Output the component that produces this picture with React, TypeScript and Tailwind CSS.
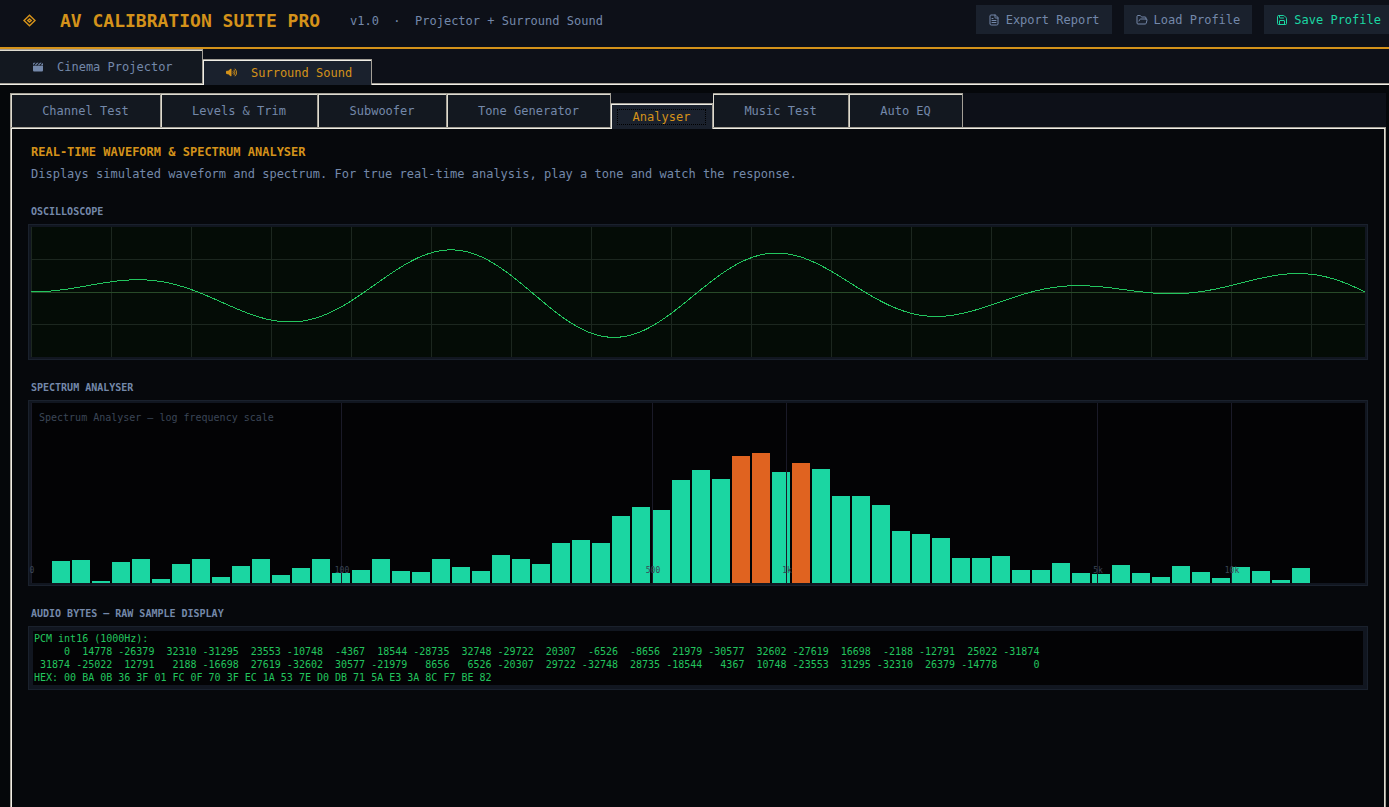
import React from "react";
import { FileText, FolderOpen, Save } from "lucide-react";
import { FaClapperboard, FaVolumeHigh } from "react-icons/fa6";

const BARS = [
  22, 23, 2, 21, 24, 4, 19, 24, 6, 17, 24, 8, 15, 24, 10, 13, 24, 12, 11, 24, 16, 12, 28, 24, 19, 40, 43, 40, 67, 76,
  73, 103, 113, 104, 127, 130, 111, 120, 114, 87, 87, 78, 52, 49, 45, 25, 25, 27, 13, 13, 20, 10, 9, 18, 10, 6, 17, 11,
  5, 16, 12, 3, 15,
];

const TICKS = [
  { x: 0, label: "0" },
  { x: 310, label: "100" },
  { x: 621, label: "500" },
  { x: 755, label: "1k" },
  { x: 1066, label: "5k" },
  { x: 1200, label: "10k" },
];

const WAVE_WIDTH = 1334;
const WAVE_POINTS = Array.from({ length: WAVE_WIDTH / 2 + 1 }, (_, i) => {
  const x = i * 2;
  const u = x / WAVE_WIDTH;
  const y = 65 - 45.5 * Math.sin(8 * Math.PI * u) * Math.sin(1.2 * Math.PI * u);
  return `${x},${y.toFixed(2)}`;
}).join(" ");

const ROW_A = [
  0, 14778, -26379, 32310, -31295, 23553, -10748, -4367, 18544, -28735, 32748, -29722, 20307, -6526, -8656, 21979,
  -30577, 32602, -27619, 16698, -2188, -12791, 25022, -31874,
];
const ROW_B = [
  31874, -25022, 12791, 2188, -16698, 27619, -32602, 30577, -21979, 8656, 6526, -20307, 29722, -32748, 28735, -18544,
  4367, 10748, -23553, 31295, -32310, 26379, -14778, 0,
];
const formatRow = (row: number[]) => row.map((n) => String(n).padStart(6)).join(" ");

const PCM_TEXT = [
  "PCM int16 (1000Hz):",
  formatRow(ROW_A),
  formatRow(ROW_B),
  "HEX: 00 BA 0B 36 3F 01 FC 0F 70 3F EC 1A 53 7E D0 DB 71 5A E3 3A 8C F7 BE 82",
].join("\n");

const TABS = [
  { label: "Channel Test", width: "w-[151px]" },
  { label: "Levels & Trim", width: "w-[157px]" },
  { label: "Subwoofer", width: "w-[129px]" },
  { label: "Tone Generator", width: "w-[164px]" },
  { label: "Analyser", width: "w-[102px]" },
  { label: "Music Test", width: "w-[136px]" },
  { label: "Auto EQ", width: "w-[114px]" },
];

function Logo() {
  return (
    <svg viewBox="0 0 13 13" className="h-[13px] w-[13px]" fill="none" aria-hidden="true">
      <path d="M6.5 1.2 12 6.5 6.5 11.8 1 6.5Z" stroke="#d4921a" strokeWidth="1.5" />
      <path d="M6.5 4 9.3 6.5 6.5 9 3.7 6.5Z" fill="#d4921a" />
      <path d="M5.8 6.5h1.4" stroke="#5c4214" strokeWidth="1" />
    </svg>
  );
}

function HeaderButton({ icon, children, className }: { icon: React.ReactNode; children: React.ReactNode; className: string }) {
  return (
    <button type="button" className={`flex h-[29px] shrink-0 items-center gap-1.5 bg-[#1a212d] px-3 whitespace-pre ${className}`}>
      {icon}
      {children}
    </button>
  );
}

function Section({ title, className, children }: { title: string; className: string; children: React.ReactNode }) {
  return (
    <section className={className}>
      <h3 className="mb-[5px] pl-[3px] text-[10px] leading-[14px] font-bold text-[#7488aa]">{title}</h3>
      {children}
    </section>
  );
}

export default function App() {
  return (
    <div className="flex h-screen flex-col overflow-hidden bg-[#05070a] font-['DejaVu_Sans_Mono',monospace] text-xs text-[#7488aa]">
      <header className="flex h-[49px] shrink-0 items-start overflow-hidden border-b-2 border-[#d4921a] bg-[#0d1018] pl-[23px]">
        <div className="flex h-[41px] items-center whitespace-pre">
          <Logo />
          <h1 className="ml-6 w-[290px] text-lg font-bold text-[#d4921a]">AV CALIBRATION SUITE PRO</h1>
          <span>v1.0  ·  Projector + Surround Sound</span>
        </div>
        <div className="mt-[5px] -mr-1 ml-auto flex gap-3">
          <HeaderButton className="text-[#7488aa]" icon={<FileText size={12} />}>Export Report</HeaderButton>
          <HeaderButton className="text-[#7488aa]" icon={<FolderOpen size={12} />}>Load Profile</HeaderButton>
          <HeaderButton className="text-[#1bd6a2]" icon={<Save size={12} />}>Save Profile</HeaderButton>
        </div>
      </header>

      <nav className="flex h-9 shrink-0 items-end bg-[#0d1018] shadow-[inset_0_-1px_#f0eee6,inset_0_-2px_#a39f96]">
        <button
          type="button"
          className="mb-0.5 flex h-[34px] w-[203px] items-center gap-[14px] border-t border-r border-[#a39f96] bg-[#131820] pl-[33px] shadow-[inset_0_1px_#dedbd0]"
        >
          <FaClapperboard size={10} />
          Cinema Projector
        </button>
        <button
          type="button"
          className="flex h-[26px] w-[169px] items-center gap-[14px] border-t border-r border-[#a39f96] bg-[#1a212d] pl-[23px] text-[#d4921a] shadow-[inset_1px_1px_#f0eee6]"
        >
          <FaVolumeHigh size={11} />
          Surround Sound
        </button>
      </nav>

      <main className="mr-[3px] ml-[10px] mt-2 flex min-h-0 flex-1 flex-col">
        <div role="tablist" className="flex h-[34px] shrink-0 items-start bg-[#0d1018]">
          {TABS.map((tab, i) =>
            tab.label === "Analyser" ? (
              <button
                key={tab.label}
                type="button"
                role="tab"
                aria-selected="true"
                className={`relative z-10 -mb-0.5 flex h-[26px] shrink-0 self-end border-t border-r border-[#a39f96] bg-[#1a212d] px-[6px] pt-[5px] pb-1 text-[#d4921a] shadow-[inset_1px_1px_#f0eee6] ${tab.width}`}
              >
                <span className="h-4 w-full border border-dotted border-black text-center leading-[14px]">{tab.label}</span>
              </button>
            ) : (
              <button
                key={tab.label}
                type="button"
                role="tab"
                aria-selected="false"
                className={`h-[34px] shrink-0 border-t border-r border-[#a39f96] bg-[#131820] shadow-[inset_1px_1px_#dedbd0] ${i === 0 ? "border-l" : ""} ${tab.width}`}
              >
                {tab.label}
              </button>
            ),
          )}
        </div>

        <div className="min-h-0 flex-1 border-x border-t border-[#a39f96] bg-[#06080c] px-[17px] pt-4 shadow-[inset_1px_1px_#f0eee6,inset_-1px_0_#dedbd0]">
          <h2 className="pl-[3px] leading-4 font-bold text-[#d4921a]">REAL-TIME WAVEFORM &amp; SPECTRUM ANALYSER</h2>
          <p className="mt-1.5 pl-[3px] leading-4">
            Displays simulated waveform and spectrum. For true real-time analysis, play a tone and watch the response.
          </p>

          <Section title="OSCILLOSCOPE" className="mt-[23px]">
            <div className="border border-[#1a212d] bg-[#111620] p-0.5">
              <svg viewBox="0 0 1334 130" preserveAspectRatio="none" className="block h-[130px] w-full bg-[#040c06]">
                <g fill="#1c271f">
                  {Array.from({ length: 17 }, (_, i) => (
                    <rect key={i} x={i * 80} y="0" width="1" height="130" />
                  ))}
                  <rect x="0" y="32" width="1334" height="1" />
                  <rect x="0" y="97" width="1334" height="1" />
                </g>
                <rect x="0" y="65" width="1334" height="1" fill="#284a28" />
                <polyline points={WAVE_POINTS} fill="none" stroke="#22c55e" strokeWidth="1" shapeRendering="crispEdges" />
              </svg>
            </div>
          </Section>

          <Section title="SPECTRUM ANALYSER" className="mt-[21px]">
            <div className="border border-[#1a212d] bg-[#111620] p-0.5">
              <div className="relative h-[180px] bg-[#030305]">
                <svg viewBox="0 0 1334 180" preserveAspectRatio="none" className="block h-full w-full">
                  {BARS.map((h, i) => (
                    <rect
                      key={i}
                      x={21 + i * 20}
                      y={180 - h}
                      width="18"
                      height={h}
                      fill={h >= 120 ? "#e06320" : "#1bd6a2"}
                    />
                  ))}
                  {TICKS.map((t) => (
                    <rect key={t.label} x={t.x} y="0" width="1" height="180" fill="#1a1a28" />
                  ))}
                </svg>
                <span className="absolute top-2 left-2 text-[10px] leading-[14px] text-[#3b4657]">
                  Spectrum Analyser — log frequency scale
                </span>
                {TICKS.map((t) => (
                  <span
                    key={t.label}
                    className="absolute bottom-[7px] -translate-x-1/2 text-[8px] leading-[10px] text-[#3b4657]"
                    style={{ left: `${((t.x + 1) / WAVE_WIDTH) * 100}%` }}
                  >
                    {t.label}
                  </span>
                ))}
              </div>
            </div>
          </Section>

          <Section title="AUDIO BYTES — RAW SAMPLE DISPLAY" className="mt-[21px]">
            <div className="border border-[#1a212d] bg-[#111620] p-1">
              <pre className="overflow-hidden bg-[#030305] p-px font-['DejaVu_Sans_Mono',monospace] text-[10px] leading-[13px] text-[#22c55e]">
                {PCM_TEXT}
              </pre>
            </div>
          </Section>
        </div>
      </main>
    </div>
  );
}
